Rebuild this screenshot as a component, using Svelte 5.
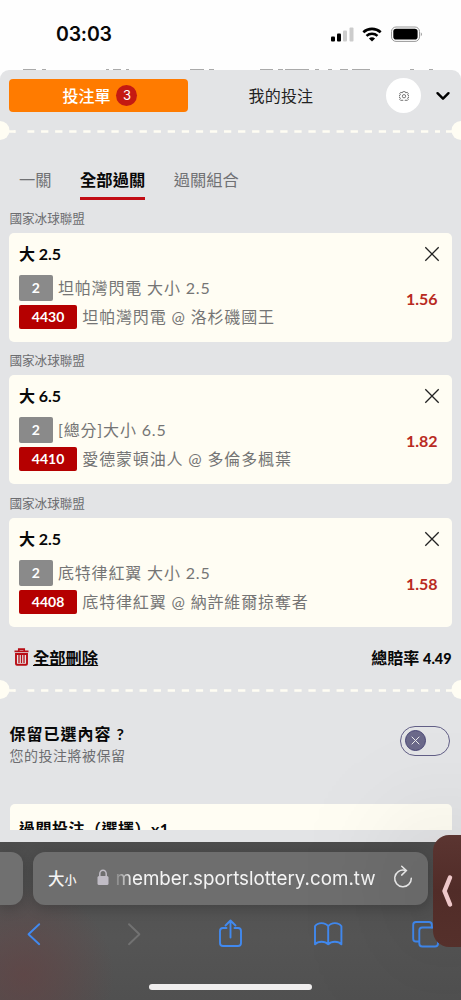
<script lang="ts">
  const bets = [
    { league: '國家冰球聯盟', pick: '大 2.5', tag: '2', market: '坦帕灣閃電 大小 2.5', code: '4430', match: '坦帕灣閃電 @ 洛杉磯國王', odds: '1.56' },
    { league: '國家冰球聯盟', pick: '大 6.5', tag: '2', market: '[總分]大小 6.5', code: '4410', match: '愛德蒙頓油人 @ 多倫多楓葉', odds: '1.82' },
    { league: '國家冰球聯盟', pick: '大 2.5', tag: '2', market: '底特律紅翼 大小 2.5', code: '4408', match: '底特律紅翼 @ 納許維爾掠奪者', odds: '1.58' }
  ];
  const tabs = ['一關', '全部過關', '過關組合'];
  let active = $state('全部過關');
</script>

{#snippet divider()}
  <svg class="divider" width="461" height="20" viewBox="0 0 461 20">
    <circle cx="0" cy="9.5" r="9.5" />
    <circle cx="461" cy="9.5" r="9.5" />
    <path d="M0 10.5H15.5M27.4 10.5H440" stroke-dasharray="7.3 6.77" stroke-dashoffset="0.4" />
    <path d="M8 10.5h7.5M446 10.5h7" />
  </svg>
{/snippet}

<div class="phone">
  <header class="status">
    <span class="time">03:03</span>
    <svg width="94" height="18" viewBox="0 0 94 18">
      <rect x="0" y="10.5" width="4" height="5" rx="1" />
      <rect x="6" y="7.5" width="4" height="8" rx="1" />
      <rect x="12" y="4.5" width="4" height="11" rx="1" fill="#ccc" />
      <rect x="18.500" y="1.5" width="4" height="14" rx="1" fill="#ccc" />
      <g fill="none" stroke="#000" stroke-width="2.6">
        <path d="M32.300 6.2a13 13 0 0 1 17.4 0" />
        <path d="M35.500 9.9a8.3 8.3 0 0 1 11 0" />
      </g>
      <path d="M37.900 12.4a5 5 0 0 1 6.2 0L41 15.6Z" />
      <rect x="60.500" y="1" width="28" height="14.4" rx="4.5" fill="none" stroke="#999" />
      <rect x="62.300" y="2.8" width="24.300" height="10.8" rx="2.8" />
      <path d="M89.800 6.2q2 2 0 4.2Z" fill="#888" />
    </svg>
  </header>
  <svg class="strip" width="461" height="1" viewBox="0 0 461 1">
    <path d="M23 .5h13M42 .5h4M106 .5h3M113 .5h8M126 .5h3M190 .5h14M209 .5h5M260 .5h13M278 .5h5M285 .5h24M315 .5h4M328 .5h4M340 .5h8M352 .5h18M410 .5h4M429 .5h4" />
  </svg>

  <main class="sheet">
    <nav class="top">
      <button class="slip">投注單 <span class="count">3</span></button>
      <button class="mine">我的投注</button>
      <button class="gear" aria-label="設定">
        <svg width="10" height="10" viewBox="0 1 24 24">
          <path d="M10 1.500h4l.8 3 2 .9 2.700-1.500 2.700 2.800-1.500 2.600.8 2 3 .8v3.800l-3 .8-.8 2 1.500 2.700-2.700 2.700-2.700-1.500-2 .8-.8 3h-4l-.8-3-2-.8-2.700 1.500-2.700-2.700 1.500-2.700-.8-2-3-.8v-3.800l3-.8.8-2-1.500-2.600 2.700-2.800 2.700 1.500 2-.9Z" />
          <circle cx="12" cy="13.500" r="4" />
        </svg>
      </button>
      <svg class="chevron" width="16" height="12" viewBox="0 0 16 12"><path d="m2.5 3.200 5.5 5.500 5.5-5.500" /></svg>
    </nav>

    {@render divider()}

    <div class="tabs">
      {#each tabs as tab}
        <button class:active={active === tab} onclick={() => (active = tab)}>{tab}</button>
      {/each}
    </div>

    {#each bets as bet}
      <section class="bet">
        <p class="league">{bet.league}</p>
        <article class="card">
          <div class="info">
            <h3>{bet.pick}</h3>
            <p class="line market"><span class="tag">{bet.tag}</span><span class="name">{bet.market}</span></p>
            <p class="line match"><span class="tag red">{bet.code}</span><span class="name">{bet.match}</span></p>
          </div>
          <div class="side">
            <svg width="16" height="16" viewBox="0 0 16 16"><path d="m1.3 1.3 13.4 13.4M14.7 1.3 1.3 14.7" /></svg>
            <span class="odds">{bet.odds}</span>
          </div>
        </article>
      </section>
    {/each}

    <div class="summary">
      <button class="clear">
        <svg width="15" height="18" viewBox="0 0 15 18">
          <path d="M.5 3.4h14M4.8 3V1.1h5.4V3" stroke-width="1.7" />
          <path d="M2 6v9.7q0 1 1 1h9q1 0 1-1V6Z" stroke-width="1.9" />
          <path d="M5 7v8M7.5 7v8M10 7v8" stroke-width="1.3" />
        </svg>
        <span>全部刪除</span>
      </button>
      <span class="total">總賠率 <b>4.49</b></span>
    </div>

    {@render divider()}

    <div class="keep">
      <div>
        <h4>保留已選內容 ?</h4>
        <p>您的投注將被保留</p>
      </div>
      <div class="toggle">
        <span class="knob"><svg width="9" height="9" viewBox="0 0 9 9"><path d="m.7.7 7.6 7.6M8.3.7.7 8.3" /></svg></span>
      </div>
    </div>

    <div class="stake"><div class="stake-card">過關投注（選擇）x1</div></div>
  </main>

  <footer class="browser">
    <div class="address-row">
      <div class="previous"></div>
      <div class="address">
        <span class="size">大<small>小</small></span>
        <svg class="lock" width="12" height="17" viewBox="0 0 12 17">
          <rect x=".5" y="7" width="11" height="9" rx="1.5" fill="#c0bcc5" />
          <path d="M2.8 7.5V4.8a3.2 3.6 0 0 1 6.4 0v2.7" fill="none" stroke="#c0bcc5" stroke-width="1.5" />
        </svg>
        <span class="url">member.sportslottery.com.tw</span>
        <svg class="reload" width="20" height="24" viewBox="0 0 20 24">
          <path d="M11.8 5.3A8.3 8.3 0 1 0 18.3 13.2" />
          <path d="m8.7 1.2 4.7 4.4-4.7 4.5" />
        </svg>
      </div>
    </div>
    <div class="tools">
      <svg width="461" height="34" viewBox="0 0 461 34">
        <path d="M39.2 7.2 28.5 17.2 39.2 27.2" />
        <path class="off" d="m129 7.2 10.4 10-10.4 10" />
        <path d="M226.5 11H223q-3 0-3 3v12q0 3 3 3h15q3 0 3-3V14q0-3-3-3h-3.5M230.5 20.5V4M225.5 8.5l5-5 5 5" />
        <path d="M328.2 27.3V9.3c-3-4.2-10.5-4.2-13.2 0v18c3-3.4 10-3.4 13.2 0 3.2-3.4 10.2-3.4 13.2 0v-18c-2.7-4.2-10.2-4.2-13.2 0" />
        <path d="M419 24.5h-3q-2.8 0-2.8-2.8V7.8Q413.2 5 416 5h13q2.8 0 2.8 2.8v2.7" />
        <rect x="419.3" y="10.5" width="18.7" height="19" rx="3" />
      </svg>
    </div>
    <div class="home"></div>
  </footer>

  <div class="assist">
    <svg width="14" height="34" viewBox="0 0 14 34"><path d="m10 3.500-5.500 13.500 5.500 13.500" /></svg>
  </div>
</div>

<style>
  :global(body) {
    background: #fff;
  }

  .phone {
    position: relative;
    width: 461px;
    height: 1000px;
    overflow: hidden;
    background: #fefefe;
    font-family: Lato, "Noto Sans CJK TC", sans-serif;
    color: #080808;
  }

  h3, h4, p {
    margin: 0;
  }

  button {
    padding: 0;
    border: 0;
    background: none;
    font: inherit;
    color: inherit;
  }

  svg {
    display: block;
    flex: none;
  }

  .status {
    display: flex;
    justify-content: space-between;
    height: 69px;
    padding: 26px 36px 0 56px;
    box-sizing: border-box;
  }

  .time {
    font: 600 19.5px/17px Inter, sans-serif;
    letter-spacing: -0.2px;
  }

  .strip {
    height: 1px;
    stroke: #aaa;
  }

  .sheet {
    display: flex;
    flex-direction: column;
    height: 772px;
    border-radius: 9px 9px 0 0;
    background: #e3e4e6;
    overflow: hidden;
  }

  .top {
    display: flex;
    align-items: center;
    height: 51px;
    padding-left: 9.4px;
    box-sizing: border-box;
  }

  .slip {
    display: flex;
    align-items: center;
    justify-content: center;
    gap: 6px;
    width: 179px;
    height: 33px;
    padding-left: 2px;
    box-sizing: border-box;
    border-radius: 4px;
    background: #ff7b00;
    color: #fff;
    font-size: 16px;
    line-height: 22px;
    font-weight: 500;
  }

  .count {
    width: 21px;
    border-radius: 50%;
    background: #c41a12;
    font: 13px/21px Inter, sans-serif;
  }

  .mine {
    width: 185px;
    padding-bottom: 1px;
    font-size: 16px;
    letter-spacing: 0.2px;
    color: #222;
  }

  .gear {
    display: grid;
    place-items: center;
    width: 35px;
    height: 35px;
    margin-left: 13px;
    border-radius: 50%;
    background: #fff;
  }

  .gear svg {
    fill: none;
    stroke: #444;
    stroke-width: 1.7;
  }

  .chevron {
    margin-left: 13.5px;
    fill: none;
    stroke: #000;
    stroke-width: 2.4;
    stroke-linecap: round;
    stroke-linejoin: round;
  }

  .divider {
    fill: #fffdf3;
  }

  .divider path {
    fill: none;
    stroke: #fffdf3;
    stroke-width: 2.5;
  }

  .tabs {
    display: flex;
    gap: 28.5px;
    height: 67px;
    padding: 26px 0 0 19px;
    box-sizing: border-box;
  }

  .tabs button {
    height: 33px;
    padding-bottom: 4px;
    box-sizing: border-box;
    border-bottom: 3.5px solid transparent;
    font-size: 16.3px;
    line-height: 26px;
    color: #707174;
  }

  .tabs .active {
    border-color: #c20d15;
    color: #080808;
    font-weight: 700;
  }

  .bet {
    height: 142.4px;
    padding: 0 9.4px;
  }

  .league {
    height: 25px;
    font-size: 12.6px;
    line-height: 22px;
    color: #6c6d70;
  }

  .card {
    display: flex;
    justify-content: space-between;
    height: 109px;
    padding: 0 12px 0 9.5px;
    box-sizing: border-box;
    border-radius: 5px;
    background: #fffdf3;
  }

  .card h3 {
    height: 42px;
    font-size: 16px;
    line-height: 42px;
  }

  .line {
    display: flex;
    align-items: center;
    font-size: 16px;
    letter-spacing: 0.85px;
    white-space: pre;
    color: #757575;
  }

  .name {
    padding-bottom: 2px;
  }

  .market {
    height: 26px;
    gap: 5px;
  }

  .match {
    height: 24px;
    margin-top: 4px;
    gap: 5px;
  }

  .tag {
    width: 34px;
    border-radius: 2px;
    background: #8a8a8a;
    color: #fff;
    font-size: 14px;
    font-weight: 700;
    line-height: 26px;
    letter-spacing: 0;
    text-align: center;
  }

  .tag.red {
    width: 58.4px;
    background: #b50000;
    line-height: 24px;
  }

  .side {
    display: flex;
    flex-direction: column;
    align-items: flex-end;
    padding-top: 13px;
  }

  .side svg {
    stroke: #222;
    stroke-width: 1.3;
  }

  .odds {
    margin: 25px 2px 0 0;
    color: #b92a22;
    font-size: 16px;
    font-weight: 700;
    line-height: 24px;
  }

  .summary {
    display: flex;
    align-items: center;
    justify-content: space-between;
    height: 45px;
    padding: 0 9.5px 1px 13.5px;
    box-sizing: border-box;
    font-weight: 700;
  }

  .clear {
    display: flex;
    align-items: center;
    gap: 4.5px;
    font-size: 16.3px;
    text-decoration: underline;
  }

  .clear svg {
    fill: none;
    stroke: #b80d15;
  }

  .total {
    font-size: 16px;
  }

  .total b {
    font-size: 14.4px;
  }

  .keep {
    display: flex;
    justify-content: space-between;
    height: 104px;
    padding: 23px 11.5px 0 9.5px;
    box-sizing: border-box;
  }

  .keep h4 {
    font-size: 16px;
    line-height: 22px;
    letter-spacing: 1px;
  }

  .keep p {
    color: #6c6d70;
    font-size: 14px;
    line-height: 22px;
    letter-spacing: 0.5px;
  }

  .toggle {
    width: 49.5px;
    height: 30.5px;
    margin-top: 2.5px;
    padding: 3.5px 4px;
    box-sizing: border-box;
    border: 1px solid #625f86;
    border-radius: 16px;
  }

  .knob {
    display: grid;
    place-items: center;
    width: 21px;
    height: 21px;
    box-sizing: border-box;
    border: 1px solid #494675;
    border-radius: 50%;
    background: #6b698a;
  }

  .knob svg {
    stroke: #eee;
  }

  .stake {
    height: 26px;
    padding: 0 9.5px;
    overflow: hidden;
  }

  .stake-card {
    height: 70px;
    padding-left: 9.5px;
    border-radius: 5px;
    background: #fffdf3;
    font-size: 16px;
    font-weight: 700;
    line-height: 50px;
    letter-spacing: 0.5px;
  }

  .browser {
    height: 158px;
    background:
      radial-gradient(circle at 24px 133px, #66404199 0, #66404166 35px, #66404100 90px),
      linear-gradient(#4d4d4d, #555 60%, #505050);
  }

  .address-row {
    display: flex;
    gap: 10px;
    padding-top: 10px;
  }

  .previous {
    width: 23px;
    height: 53px;
    border-radius: 0 12px 12px 0;
    background: #707070;
    box-shadow: 0 3px 14px #0003;
  }

  .address {
    display: flex;
    align-items: center;
    width: 395px;
    height: 53px;
    padding-left: 15px;
    box-sizing: border-box;
    border-radius: 12px;
    background: #6e6e6e;
    box-shadow: 0 3px 14px #0003;
    color: #f4f4f4;
  }

  .size {
    width: 48.5px;
    padding-bottom: 2px;
    font-size: 16.5px;
    font-weight: 500;
    white-space: nowrap;
  }

  .size small {
    font-size: 12px;
  }

  .lock {
    margin-top: -3px;
  }

  .url {
    width: 262px;
    margin-left: 7px;
    font: 18.8px/26px Inter, sans-serif;
    white-space: nowrap;
    mask-image: linear-gradient(to right, #0003, #000 16px);
  }

  .reload {
    margin: -4px 0 0 15px;
    fill: none;
    stroke: #eee;
    stroke-width: 1.5;
    stroke-linecap: round;
  }

  .tools {
    padding-top: 12px;
    fill: none;
    stroke: #4189ef;
    stroke-width: 1.9;
    stroke-linecap: round;
    stroke-linejoin: round;
  }

  .tools .off {
    stroke: #727272;
  }

  .home {
    width: 163px;
    height: 6px;
    margin: 33px auto 0;
    border-radius: 3px;
    background: #f0eeee;
  }

  /* floating handle docked on the right edge */
  .assist {
    position: absolute;
    top: 835px;
    right: 0;
    display: grid;
    place-items: center;
    width: 28px;
    height: 112px;
    border-radius: 16px 0 0 16px;
    background: linear-gradient(#5b3531, #512c28 50%, #55302b);
    box-shadow: 0 0 120px #0006;
  }

  .assist svg {
    fill: none;
    stroke: #efc8ca;
    stroke-width: 4.5;
    stroke-linecap: round;
    stroke-linejoin: round;
  }
</style>
